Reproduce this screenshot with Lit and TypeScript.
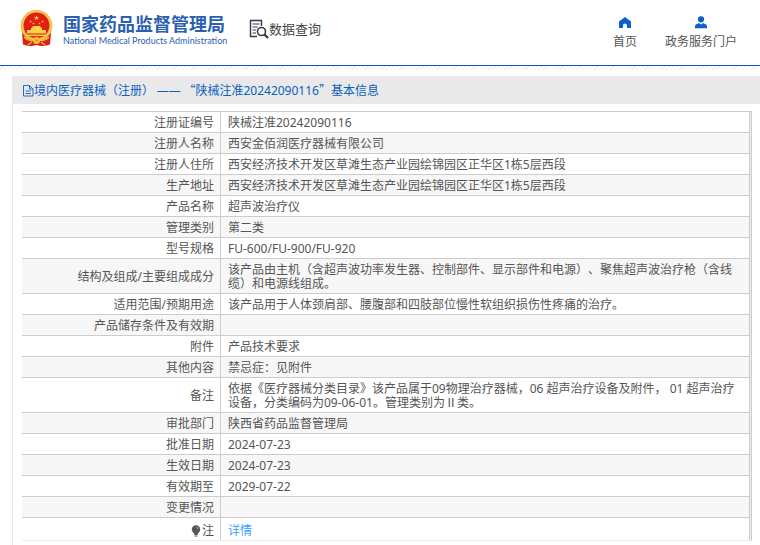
import { LitElement, html, css, svg, nothing } from "lit";
import { customElement } from "lit/decorators.js";

type Row = { label: string; value: string };

const ROWS: Row[] = [
  { label: "注册证编号", value: "陕械注准20242090116" },
  { label: "注册人名称", value: "西安金佰润医疗器械有限公司" },
  { label: "注册人住所", value: "西安经济技术开发区草滩生态产业园绘锦园区正华区1栋5层西段" },
  { label: "生产地址", value: "西安经济技术开发区草滩生态产业园绘锦园区正华区1栋5层西段" },
  { label: "产品名称", value: "超声波治疗仪" },
  { label: "管理类别", value: "第二类" },
  { label: "型号规格", value: "FU-600/FU-900/FU-920" },
  { label: "结构及组成/主要组成成分", value: "该产品由主机（含超声波功率发生器、控制部件、显示部件和电源）、聚焦超声波治疗枪（含线缆）和电源线组成。" },
  { label: "适用范围/预期用途", value: "该产品用于人体颈肩部、腰腹部和四肢部位慢性软组织损伤性疼痛的治疗。" },
  { label: "产品储存条件及有效期", value: "" },
  { label: "附件", value: "产品技术要求" },
  { label: "其他内容", value: "禁忌症：见附件" },
  { label: "备注", value: "依据《医疗器械分类目录》该产品属于09物理治疗器械，06 超声治疗设备及附件， 01 超声治疗设备，分类编码为09-06-01。管理类别为Ⅱ类。" },
  { label: "审批部门", value: "陕西省药品监督管理局" },
  { label: "批准日期", value: "2024-07-23" },
  { label: "生效日期", value: "2024-07-23" },
  { label: "有效期至", value: "2029-07-22" },
  { label: "变更情况", value: "" },
];

const star = (cx: number, cy: number, r: number) => {
  const pts = Array.from({ length: 10 }, (_, i) => {
    const a = (Math.PI / 5) * i - Math.PI / 2;
    const q = i % 2 ? r * 0.4 : r;
    return `${(cx + q * Math.cos(a)).toFixed(2)},${(cy + q * Math.sin(a)).toFixed(2)}`;
  }).join(" ");
  return svg`<polygon points=${pts} fill="#fbc83b"/>`;
};

@customElement("app-root")
export class AppRoot extends LitElement {
  static styles = css`
    :host {
      min-height: 100vh;
      display: flex;
      flex-direction: column;
      background: #fff;
      color: #555;
      font: 12px/14px "Noto Sans", "Noto Sans CJK SC", sans-serif;
      text-spacing-trim: space-all;
    }
    svg { display: block; flex: none; }
    a { color: inherit; text-decoration: none; }
    .header {
      display: flex;
      align-items: flex-start;
      height: 65px;
      box-sizing: border-box;
      padding: 10px 23px 0 20px;
    }
    .rule {
      height: 4px;
      border-top: 1px solid #0a5bb5;
      background: repeating-linear-gradient(135deg, #fff 0 2px, #efedef 2px 3px);
    }
    .brand { display: flex; gap: 10px; color: #2c5fae; }
    .brand-text { display: flex; flex-direction: column; width: 162px; padding-top: 3px; }
    .name { font: bold 18px/20px "Noto Sans CJK SC", sans-serif; white-space: nowrap; }
    .sub { font: 9px/12px Lato, sans-serif; white-space: nowrap; padding-top: 2px; }
    .query {
      display: flex;
      align-items: center;
      margin: 8px auto 0 23px;
      color: #444;
      font: 13px/20px "Noto Sans CJK SC", sans-serif;
      white-space: nowrap;
    }
    .nav { display: flex; gap: 28px; padding-top: 6px; }
    .nav a { display: flex; flex-direction: column; align-items: center; gap: 6px; line-height: 14px; }
    .panel {
      flex: 1;
      margin: 6px 0 0 12px;
      border-left: 1px solid #e6e6ee;
    }
    .title {
      display: flex;
      align-items: center;
      margin: 0 0 0 -1px;
      padding: 2px 10px 0 11px;
      box-sizing: border-box;
      height: 28px;
      background: #e9e9e9;
      border-bottom: 1px solid #e8e8f2;
      color: #0a5fc0;
      font: 12px/14px "Noto Sans CJK SC", sans-serif;
      white-space: pre;
    }
    .num { font-family: "Noto Sans", sans-serif; }
    .frame {
      margin: 7px 8px 0 9px;
      border-top: 1px solid #ccc;
      border-right: 1px solid #ccc;
      border-bottom: 1px solid #ebebf3;
      padding-right: 1px;
      background: #ebebf3;
    }
    table { width: 100%; border-collapse: separate; border-spacing: 0; background: #fff; border-right: 1px solid #ccc; table-layout: fixed; }
    .label-col { width: 199px; }
    th, td { height: 14px; padding: 4px 6px 2px; border-bottom: 1px solid #ccc; font-weight: normal; vertical-align: middle; }
    th { text-align: right; border-right: 1px solid #ccc; }
    td { text-align: left; padding-left: 7px; }
    tr:nth-child(even) { background: #f7f7f7; }
    .last th, .last td { padding-top: 6px; border-bottom: 0; background: #fff; }
    .note { display: flex; align-items: center; justify-content: flex-end; gap: 1px; }
    .link { color: #409eff; }
  `;

  private emblem() {
    return svg`<svg width="33" height="37" viewBox="0 0 33 37" aria-hidden="true">
      <path d="M2 23 3 34.500Q9 37 16.500 35Q24 37 30 34.500L31 23Z" fill="#d9201a"/>
      <circle cx="16.500" cy="15.800" r="15.800" fill="#f2b632"/>
      <circle cx="16.500" cy="15.800" r="14.300" fill="none" stroke="#f9d366" stroke-width="1"/>
      <circle cx="16.500" cy="15.500" r="12.900" fill="#e01f16"/>
      ${star(16.5, 8, 2.8)}${star(10.5, 11.5, 1.4)}${star(13.5, 13.5, 1.2)}${star(19.5, 13.5, 1.2)}${star(22.5, 11.5, 1.4)}
      <path d="M11 20v-2l1-.5 1-1.500h7l1 1.500 1 .5v2h4v3.500H7V20Z" fill="#fbd04b"/>
      <path d="M5.500 24.500h22v1.600h-22Z" fill="#f6c63d"/>
      <path d="M3 26.500q5 3.500 9 3.500l1 3.500q-4 .5-6-1Q4 31 3 26.500ZM30 26.500q-5 3.500-9 3.500l-1 3.500q4 .5 6-1 3-1.500 4-6Z" fill="#d9201a"/>
      <path d="M4 27q4 4 9 3.500M29 27q-4 4-9 3.500M8 35l4-3M25 35l-4-3" fill="none" stroke="#f3bd35" stroke-width="1.200"/>
      <circle cx="16.500" cy="30.500" r="3.500" fill="#f3bd35"/>
      <circle cx="16.500" cy="30.500" r="1.200" fill="#e8872a"/>
    </svg>`;
  }

  render() {
    return html`
      <header class="header">
        <div class="brand">
          ${this.emblem()}
          <div class="brand-text">
            <span class="name">国家药品监督管理局</span>
            <span class="sub">National Medical Products Administration</span>
          </div>
        </div>
        <div class="query">
          <svg width="21" height="21" viewBox="0 0 21 21" fill="none" stroke="#39374a" aria-hidden="true">
            <path d="M9 18.500H2.500V2.500h11V8" stroke-width="1.400"/>
            <path d="M4.500 6h7M4.500 9h5M4.500 12h3.500M4.500 15h3.500" stroke-width="1.200"/>
            <circle cx="13.500" cy="13.500" r="4" stroke-width="1.600"/>
            <path d="m16.500 16.500 3.500 3.500" stroke-width="2.400"/>
          </svg>
          <span>数据查询</span>
        </div>
        <nav class="nav">
          <a href="#home">
            <svg width="12" height="13" viewBox="0 0 12 13" aria-hidden="true"><path d="M6 1 12 5.500V12H8V9.500a2 2 0 0 0-4 0V12H0V5.500Z" fill="#0a5fc8"/></svg>
            <span>首页</span>
          </a>
          <a href="#portal">
            <svg width="12" height="13" viewBox="0 0 12 13" aria-hidden="true"><circle cx="6" cy="3.300" r="3.100" fill="#0a5fc8"/><path d="M0 12.300v-2Q0 8.500 2 8L4 7l2 1.500L8 7l2 1q2 .5 2 2.300v2Z" fill="#0a5fc8"/></svg>
            <span>政务服务门户</span>
          </a>
        </nav>
      </header>
      <div class="rule"></div>
      <main class="panel">
        <h1 class="title"><svg width="11" height="12" viewBox="0 0 11 12" fill="none" stroke="#0a5fc0" stroke-width=".9" aria-hidden="true"><path d="M.5.500h6l3.500 3.500v7H.5ZM6.500.500v3.500H10M2.500 6h5.500M2.500 8.500h5.500"/></svg><span>境内医疗器械（注册） <span class="num">——</span> “陕械注准<span class="num">20242090116</span>”基本信息</span></h1>
        <div class="frame">
          <table>
            <colgroup><col class="label-col" /><col /></colgroup>
            <tbody>
              ${ROWS.map((r) => html`<tr><th scope="row">${r.label}</th><td>${r.value || nothing}</td></tr>`)}
              <tr class="last">
                <th scope="row"><div class="note"><svg width="10" height="12" viewBox="0 0 10 12" aria-hidden="true"><circle cx="5" cy="4.500" r="4.200" fill="#555"/><path d="M3 8h4l-.5 2h-3Z" fill="#555"/><path d="M3.500 11h3" stroke="#555"/><path d="M5.500 2q1.500.3 1.800 2" fill="none" stroke="#ccc" stroke-width=".8"/></svg>注</div></th>
                <td><a class="link" href="#detail">详情</a></td>
              </tr>
            </tbody>
          </table>
        </div>
      </main>
    `;
  }
}
